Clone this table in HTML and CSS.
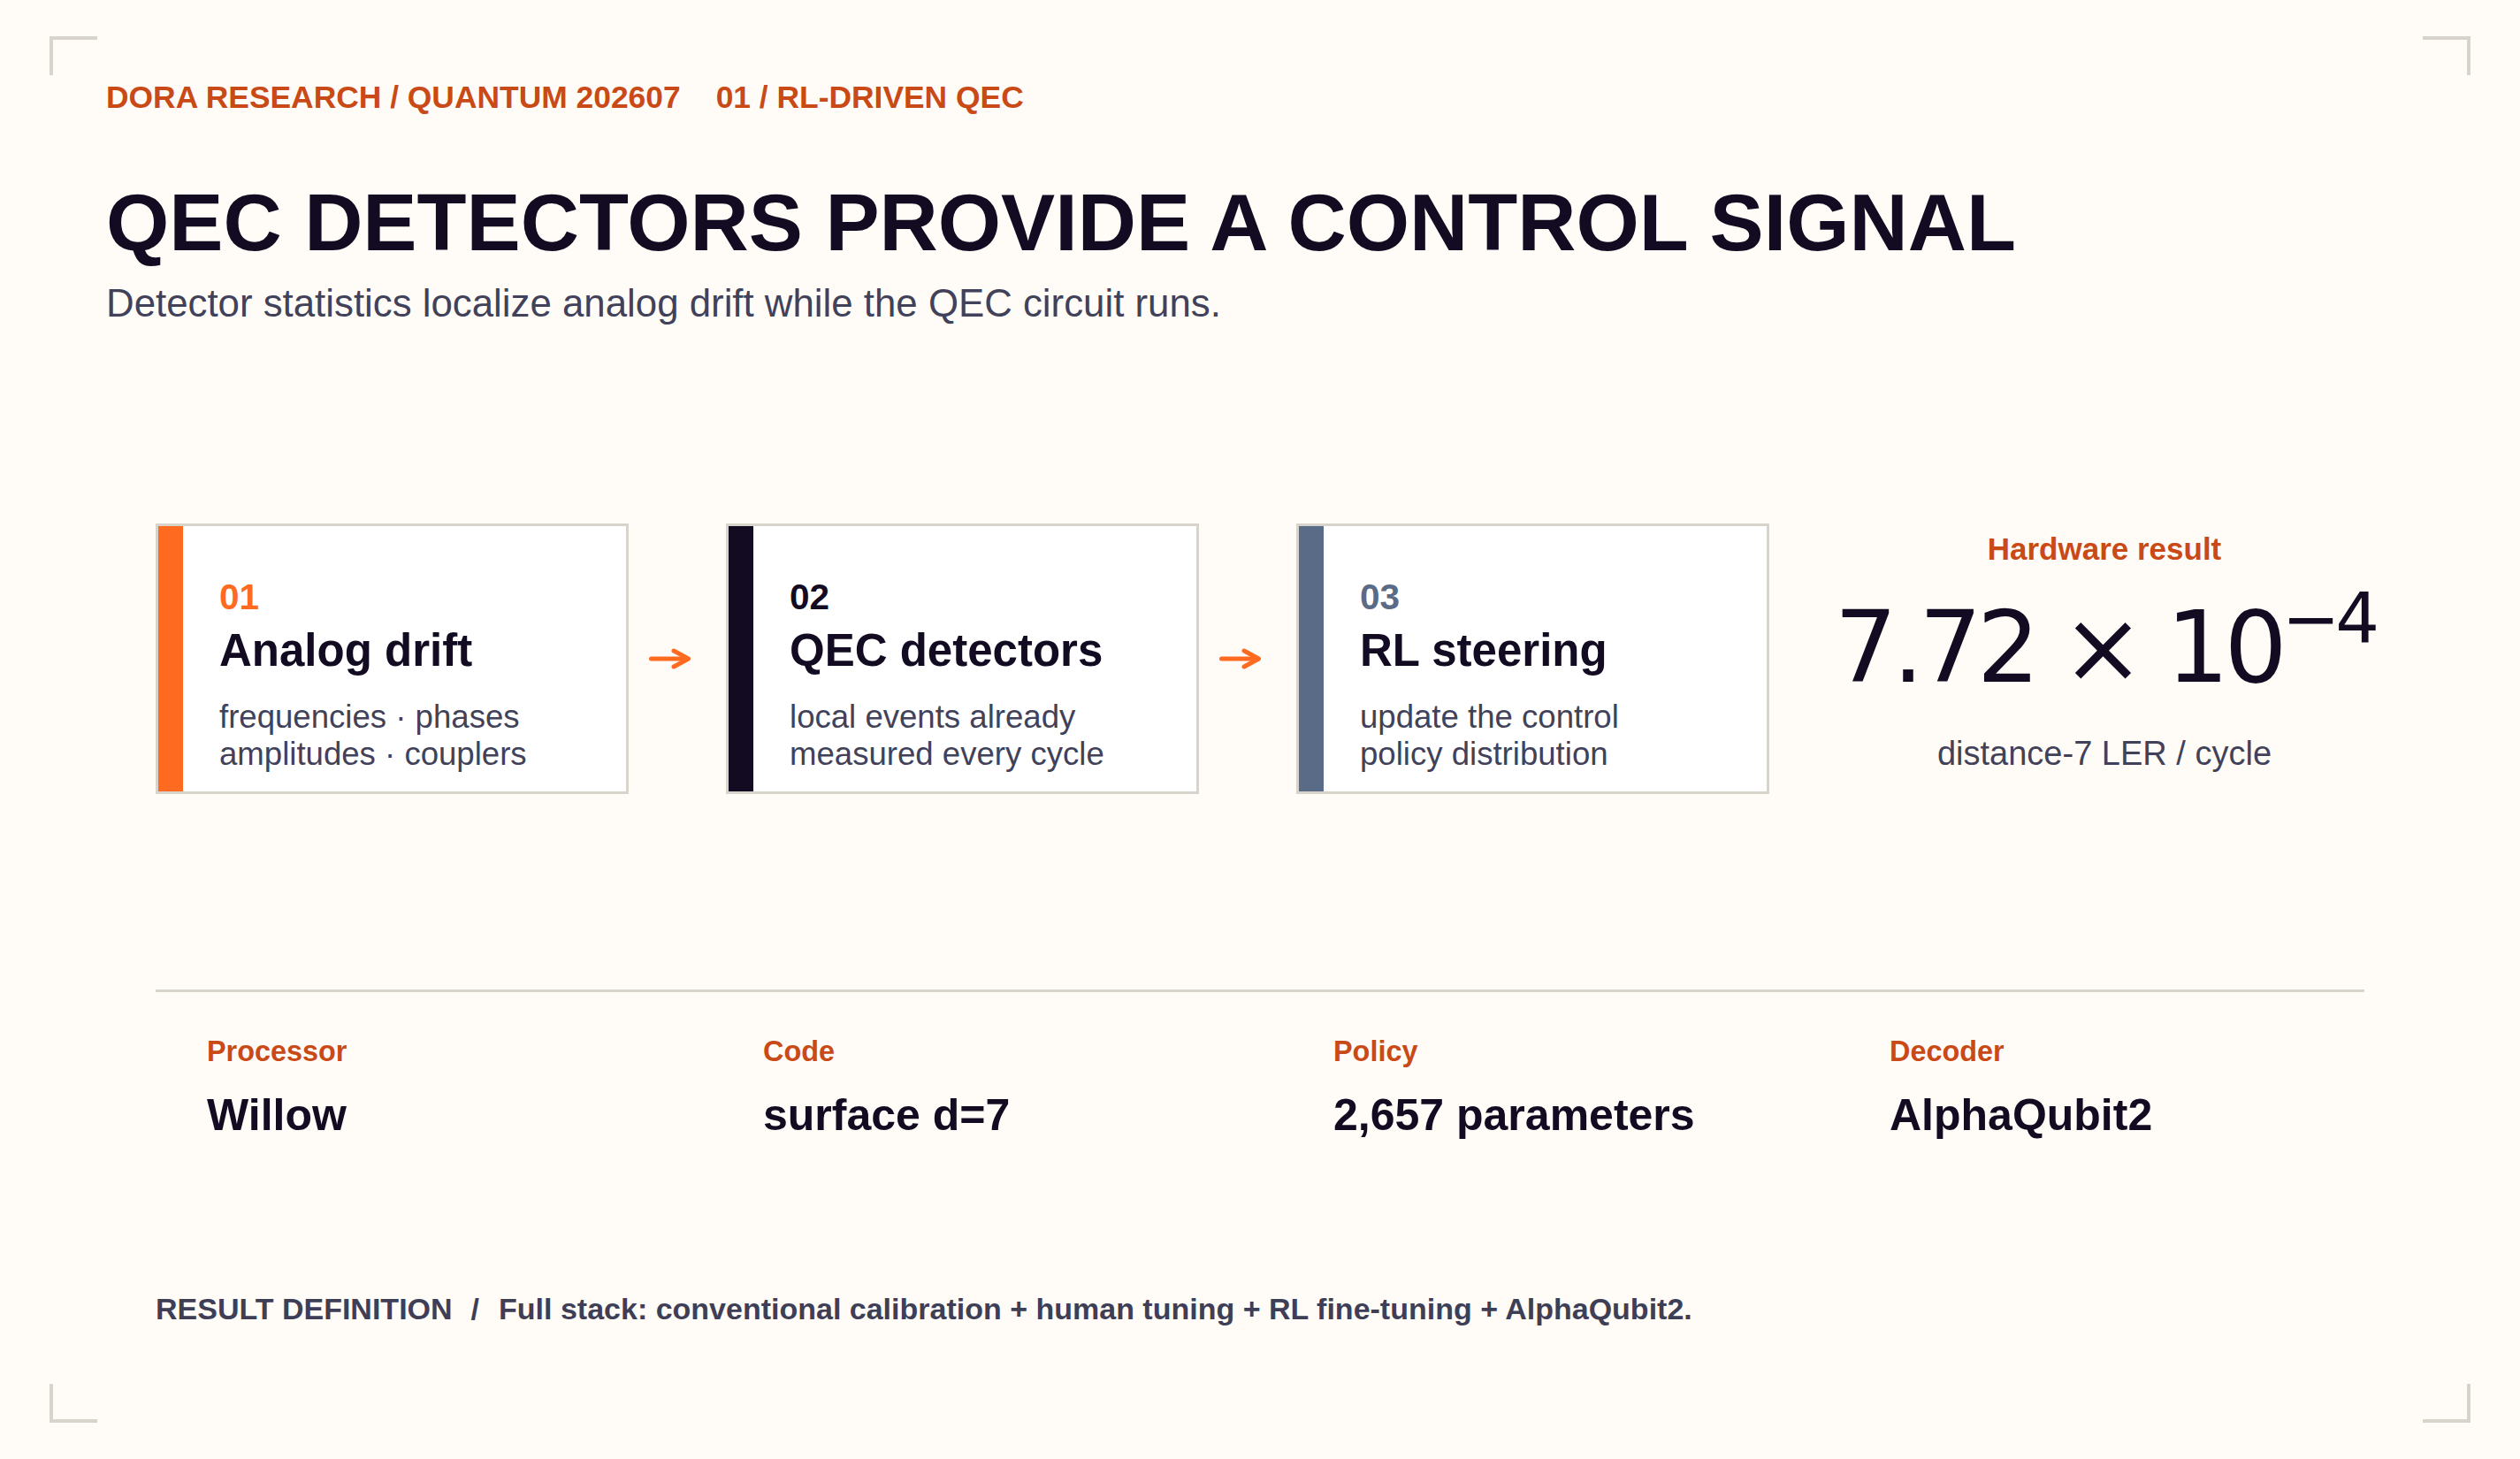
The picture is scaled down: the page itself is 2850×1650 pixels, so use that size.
FILE: index.html
```html
<!DOCTYPE html>
<html lang="en">
<head>
<meta charset="utf-8">
<title>QEC detectors provide a control signal</title>
<link rel="stylesheet" href="styles.css">
</head>
<body>
<div class="page">
  <span class="corner corner-tl"></span>
  <span class="corner corner-tr"></span>
  <span class="corner corner-bl"></span>
  <span class="corner corner-br"></span>

  <header class="head">
    <div class="eyebrow">
      <span>DORA RESEARCH / QUANTUM 202607</span>
      <span>01 / RL-DRIVEN QEC</span>
    </div>
    <h1 class="title">QEC DETECTORS PROVIDE A CONTROL SIGNAL</h1>
    <p class="subtitle">Detector statistics localize analog drift while the QEC circuit runs.</p>
  </header>

  <main class="content">
    <section class="flow">
      <div class="card card-orange">
        <div class="bar"></div>
        <div class="card-body">
          <div class="num">01</div>
          <div class="card-title">Analog drift</div>
          <div class="card-desc">frequencies · phases<br>amplitudes · couplers</div>
        </div>
      </div>
      <div class="arrow">
        <svg width="48" height="24" viewBox="0 0 48 24"><path d="M2.5 12H43" /><path d="M28 3L44.5 12L28 21" /></svg>
      </div>
      <div class="card card-dark">
        <div class="bar"></div>
        <div class="card-body">
          <div class="num">02</div>
          <div class="card-title">QEC detectors</div>
          <div class="card-desc">local events already<br>measured every cycle</div>
        </div>
      </div>
      <div class="arrow">
        <svg width="48" height="24" viewBox="0 0 48 24"><path d="M2.5 12H43" /><path d="M28 3L44.5 12L28 21" /></svg>
      </div>
      <div class="card card-slate">
        <div class="bar"></div>
        <div class="card-body">
          <div class="num">03</div>
          <div class="card-title">RL steering</div>
          <div class="card-desc">update the control<br>policy distribution</div>
        </div>
      </div>
      <div class="result">
        <div class="result-label">Hardware result</div>
        <div class="result-value"><span class="value-text">7.72 × 10<sup>−4</sup></span></div>
        <div class="result-caption">distance-7 LER / cycle</div>
      </div>
    </section>

    <section class="stats">
      <div class="stat">
        <div class="stat-label">Processor</div>
        <div class="stat-value">Willow</div>
      </div>
      <div class="stat">
        <div class="stat-label">Code</div>
        <div class="stat-value">surface d=7</div>
      </div>
      <div class="stat">
        <div class="stat-label">Policy</div>
        <div class="stat-value">2,657 parameters</div>
      </div>
      <div class="stat">
        <div class="stat-label">Decoder</div>
        <div class="stat-value">AlphaQubit2</div>
      </div>
    </section>

    <footer class="definition">
      <span>RESULT DEFINITION</span><span class="sep">/</span><span>Full stack: conventional calibration + human tuning + RL fine-tuning + AlphaQubit2.</span>
    </footer>
  </main>
</div>
</body>
</html>
```
FILE: styles.css
```css
* { box-sizing: border-box; }

html, body {
  margin: 0;
  padding: 0;
  background: #fffcf7;
}

body {
  font-family: "Liberation Sans", Arial, sans-serif;
  color: #120b22;
}

.page {
  position: relative;
  width: 2850px;
  height: 1650px;
  padding: 90px 0 0 120px;
  overflow: hidden;
}

/* corner crop marks */
.corner {
  position: absolute;
  width: 54px;
  height: 44px;
  border-color: #d8d4cb;
  border-style: solid;
  border-width: 0;
}
.corner-tl { left: 56px; top: 41px; border-top-width: 4px; border-left-width: 4px; }
.corner-tr { right: 56px; top: 41px; border-top-width: 4px; border-right-width: 4px; }
.corner-bl { left: 56px; bottom: 41px; border-bottom-width: 4px; border-left-width: 4px; }
.corner-br { right: 56px; bottom: 41px; border-bottom-width: 4px; border-right-width: 4px; }

/* header */
.eyebrow {
  display: flex;
  gap: 40px;
  font-size: 35.4px;
  line-height: 40px;
  font-weight: 700;
  color: #c94a16;
}

.title {
  margin: 71px 0 0;
  font-size: 91.7px;
  line-height: 100px;
  font-weight: 700;
  color: #120b22;
}

.subtitle {
  margin: 17px 0 0;
  font-size: 43.8px;
  line-height: 50px;
  color: #41425a;
}

/* main content */
.content {
  margin-left: 56px;
  width: 2498px;
}

.flow {
  display: flex;
  align-items: flex-start;
  margin-top: 224px;
}

.card {
  display: flex;
  flex: none;
  width: 535px;
  height: 306px;
  background: #ffffff;
  border: 3px solid #d8d4cb;
}

.bar {
  width: 28px;
  flex: none;
}
.card-orange .bar { background: #ff6a21; }
.card-dark .bar { background: #120b22; }
.card-slate .bar { background: #5a6b88; }

.card-body {
  padding: 57px 0 0 41px;
}

.num {
  font-size: 40.5px;
  line-height: 46px;
  font-weight: 700;
}
.card-orange .num { color: #ff6a21; }
.card-dark .num { color: #120b22; }
.card-slate .num { color: #5a6b88; }

.card-title {
  margin-top: 9px;
  font-size: 51px;
  line-height: 58px;
  font-weight: 700;
  color: #120b22;
}

.card-desc {
  margin-top: 25px;
  font-size: 36.6px;
  line-height: 42px;
  color: #41425a;
}

.arrow {
  width: 110px;
  flex: none;
  align-self: center;
  display: flex;
  padding-left: 23px;
}
.arrow svg {
  display: block;
  fill: none;
  stroke: #ff6a21;
  stroke-width: 5;
  stroke-linecap: round;
  stroke-linejoin: round;
}

.result {
  flex: 1;
  min-width: 0;
  margin: 9px 0 0 85px;
  text-align: center;
}

.result-label {
  font-size: 35px;
  line-height: 40px;
  font-weight: 700;
  color: #c94a16;
}

.result-value {
  display: flex;
  justify-content: center;
  margin-top: 31px;
  font-family: "DejaVu Sans", sans-serif;
  font-size: 112px;
  line-height: 120px;
  letter-spacing: -0.05em;
  color: #120b22;
}
.value-text {
  flex: none;
  white-space: nowrap;
}
.value-text sup {
  font-size: 0.7em;
  line-height: 0;
  vertical-align: 0.56em;
}

.result-caption {
  margin-top: 38px;
  font-size: 38px;
  line-height: 44px;
  color: #41425a;
}

/* stats */
.stats {
  margin-top: 221px;
  border-top: 3px solid #d8d4cb;
  padding: 48px 0 0 58px;
  display: grid;
  grid-template-columns: 629px 645px 629px 1fr;
}

.stat-label {
  font-size: 32.4px;
  line-height: 38px;
  font-weight: 700;
  color: #c94a16;
}

.stat-value {
  margin-top: 24px;
  font-size: 50px;
  line-height: 58px;
  font-weight: 700;
  color: #120b22;
}

/* footer definition */
.definition {
  margin-top: 170px;
  font-size: 34px;
  line-height: 40px;
  font-weight: 700;
  color: #3e3f56;
}
.definition .sep {
  margin: 0 22px 0 21px;
}
```
